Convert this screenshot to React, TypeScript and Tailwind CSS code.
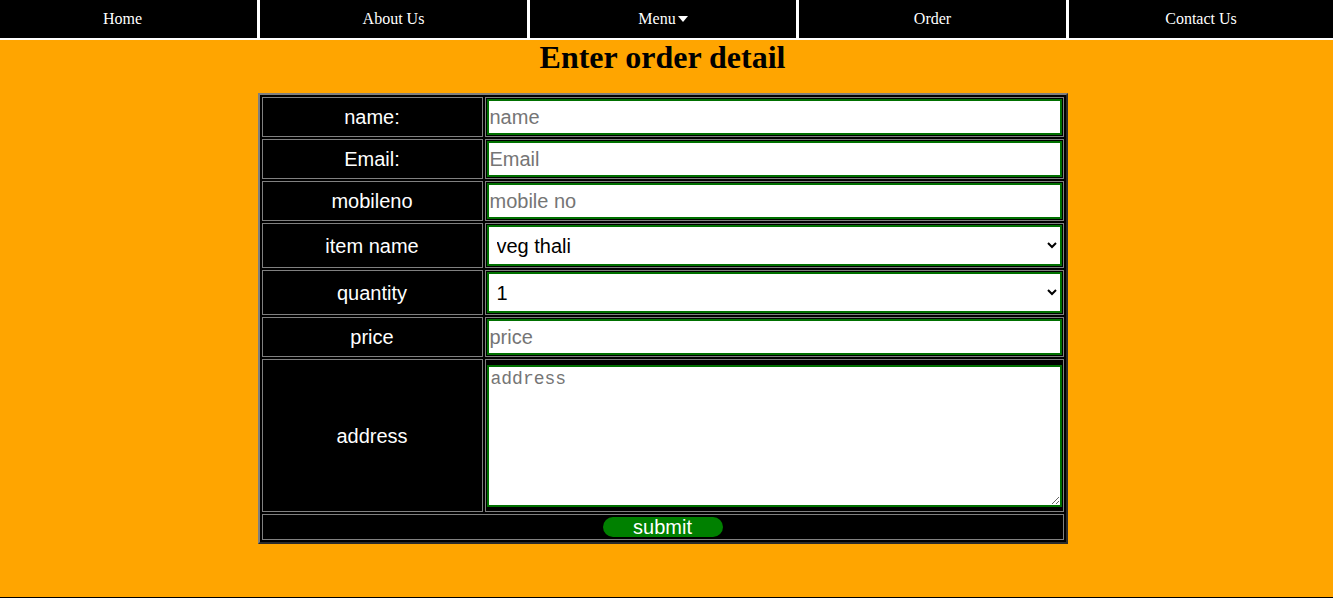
import React from "react";

const navItems = [
  { label: "Home", w: "w-[257px] pr-[12px]" },
  { label: "About Us", w: "w-[267px]" },
  { label: "Menu", w: "w-[266px]", caret: true },
  { label: "Order", w: "w-[267px]" },
  { label: "Contact Us", w: "flex-1" },
];

const inputCls =
  "block w-full h-[36px] bg-white border-2 border-[#007000] px-[1px] text-[20px] text-black placeholder:text-[#757575] outline-none";
const selectCls =
  "block w-full h-[41px] bg-white border-2 border-[#007000] pl-[4px] pr-[2px] text-[20px] text-black outline-none";
const labelCls =
  "border border-[#808080] p-[1px] text-center align-middle text-[20px] text-white";
const fieldCls = "border border-[#808080] p-[1px] align-middle";

export default function App() {
  return (
    <div
      className="flex h-[598px] w-full flex-col bg-[#ffa500] border-b border-black"
      style={{ fontFamily: '"Liberation Sans", Arial, sans-serif' }}
    >
      {/* top nav */}
      <nav className="flex h-[40px] gap-[3px] bg-white border-b-2 border-white">
        {navItems.map((item) => (
          <a
            key={item.label}
            href="#"
            className={`${item.w} flex h-[38px] items-center justify-center bg-black text-[16px] text-white`}
            style={{ fontFamily: '"Liberation Serif", "Times New Roman", serif' }}
          >
            {item.label}
            {item.caret && (
              <svg width="10" height="6" viewBox="0 0 10 6" className="ml-[2px]">
                <path d="M0 0 L10 0 L5 6 Z" fill="white" />
              </svg>
            )}
          </a>
        ))}
      </nav>

      <div className="flex flex-col items-center pr-[8px]">
        <h1
          className="mt-0 text-[32px] font-bold leading-[34px] text-black"
          style={{ fontFamily: '"Liberation Serif", "Times New Roman", serif' }}
        >
          Enter order detail
        </h1>

        <table className="mt-[19px] w-[810px] table-fixed border-separate border-spacing-[2px] border-2 border-t-[#808080] border-l-[#808080] border-b-[#2b2b2b] border-r-[#2b2b2b] bg-black">
          <colgroup>
            <col className="w-[221px]" />
            <col />
          </colgroup>
          <tbody>
            <tr>
              <td className={labelCls}>name:</td>
              <td className={fieldCls}>
                <input type="text" placeholder="name" className={inputCls} />
              </td>
            </tr>
            <tr>
              <td className={labelCls}>Email:</td>
              <td className={fieldCls}>
                <input type="email" placeholder="Email" className={inputCls} />
              </td>
            </tr>
            <tr>
              <td className={labelCls}>mobileno</td>
              <td className={fieldCls}>
                <input type="text" placeholder="mobile no" className={inputCls} />
              </td>
            </tr>
            <tr>
              <td className={labelCls}>item name</td>
              <td className={fieldCls}>
                <select className={selectCls} defaultValue="veg thali">
                  <option>veg thali</option>
                  <option>non veg thali</option>
                </select>
              </td>
            </tr>
            <tr>
              <td className={labelCls}>quantity</td>
              <td className={fieldCls}>
                <select className={selectCls} defaultValue="1">
                  <option>1</option>
                  <option>2</option>
                  <option>3</option>
                </select>
              </td>
            </tr>
            <tr>
              <td className={labelCls}>price</td>
              <td className={fieldCls}>
                <input type="text" placeholder="price" className={inputCls} />
              </td>
            </tr>
            <tr>
              <td className={labelCls}>address</td>
              <td className={fieldCls}>
                <textarea
                  placeholder="address"
                  className="mt-[4px] mb-[3px] block h-[142px] w-full resize-y bg-white border-2 border-[#007000] p-[2px] text-[18px] leading-[20px] text-black placeholder:text-[#757575] outline-none"
                  style={{ fontFamily: '"Liberation Mono", "DejaVu Sans Mono", monospace' }}
                />
              </td>
            </tr>
            <tr>
              <td colSpan={2} className="h-[26px] border border-[#808080] p-0 text-center align-middle">
                <button
                  type="submit"
                  className="mx-auto block h-[20px] w-[120px] rounded-full bg-[#008000] text-[20px] leading-[20px] text-white"
                >
                  submit
                </button>
              </td>
            </tr>
          </tbody>
        </table>
      </div>
    </div>
  );
}
